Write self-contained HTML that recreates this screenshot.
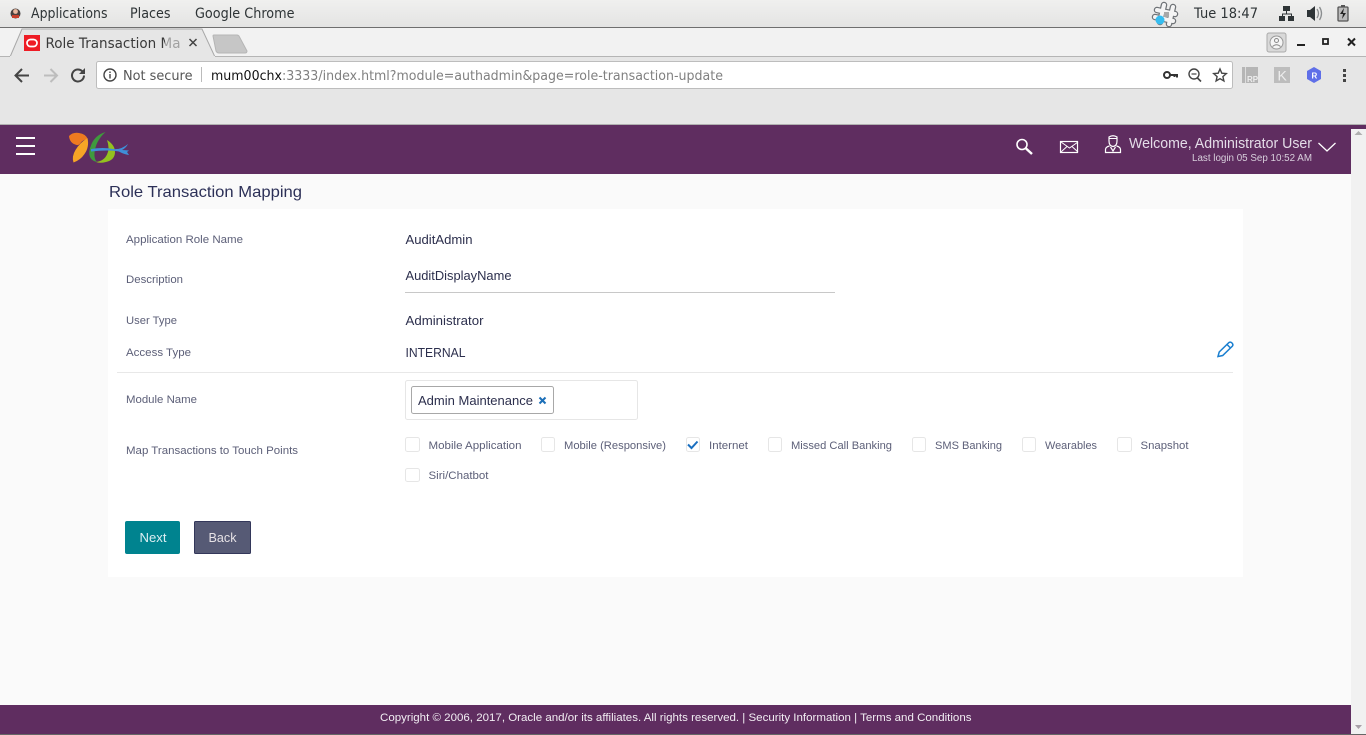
<!DOCTYPE html>
<html lang="en"><head><meta charset="utf-8"><title>Role Transaction Mapping</title>
<style>
html,body{margin:0;padding:0;width:1366px;height:735px;overflow:hidden;background:#fafafa}
svg{display:block;position:absolute;left:0;top:0}
text{font-family:"Liberation Sans",sans-serif;white-space:pre}
.ui{font-family:"DejaVu Sans","Liberation Sans",sans-serif;fill:#2e3436}
.lb{font-size:11px;fill:#5c5f78}
.v{font-size:12.5px;fill:#2c2f4d}
.cb{font-size:11px;fill:#5c5f78}
.box{fill:#fff;stroke:#e6e6e6}
</style></head><body>
<svg width="1366" height="735" viewBox="0 0 1366 735" xmlns="http://www.w3.org/2000/svg">
<defs>
<linearGradient id="top" x1="0" y1="0" x2="0" y2="1"><stop offset="0" stop-color="#f0f0ef"/><stop offset="1" stop-color="#e4e4e3"/></linearGradient>
</defs>
<!-- GNOME bar -->
<rect width="1366" height="27" fill="url(#top)"/>
<rect y="27" width="1366" height="1" fill="#6f6f6f"/>
<circle cx="15.500" cy="13.500" r="5" fill="#4a4240"/><circle cx="15.500" cy="11.500" r="2.400" fill="#e9b9a0"/><rect x="12" y="15" width="7" height="3" fill="#c8402c"/>
<text class="ui" x="31" y="18" font-size="14" textLength="76.500" lengthAdjust="spacingAndGlyphs">Applications</text>
<text class="ui" x="130" y="18" font-size="14" textLength="40.500" lengthAdjust="spacingAndGlyphs">Places</text>
<text class="ui" x="195" y="18" font-size="14" textLength="99.500" lengthAdjust="spacingAndGlyphs">Google Chrome</text>
<!-- hash-shaped tray icon -->
<g fill="none" stroke-linecap="round">
<g stroke="#6f7377" stroke-width="6.500"><path d="M1164 5l-4 17M1173 7l-4 17M1157 10l18 4M1155 17l18 4"/></g>
<g stroke="#f4f4f4" stroke-width="4"><path d="M1164 5l-4 17M1173 7l-4 17M1157 10l18 4M1155 17l18 4"/></g>
</g>
<rect x="1164" y="12" width="5" height="5" fill="#a8a8a8"/>
<circle cx="1160" cy="20" r="4.500" fill="#35bdf0"/>
<text class="ui" x="1194" y="18" font-size="14" textLength="64" lengthAdjust="spacingAndGlyphs">Tue 18:47</text>
<g fill="#2e3436"><rect x="1283" y="6" width="7" height="5"/><rect x="1279" y="16" width="6" height="5"/><rect x="1288" y="16" width="6" height="5"/><path d="M1286 11h1v2.500h5V16h-1v-1.500h-8V16h-1v-2.500h4z"/></g>
<path d="M1307 10h3l5-4v15l-5-4h-3z" fill="#2e3436"/><path d="M1317 9q3 4.500 0 9M1319.500 7q4 6.500 0 13" fill="none" stroke="#8a8d8f" stroke-width="1.300"/>
<rect x="1338" y="7" width="10" height="14" rx="1" fill="#bbb" stroke="#555" stroke-width="1.300"/><rect x="1341" y="5" width="4" height="2" fill="#555"/><path d="M1344 8l-4 6h3l-1 5 4-6h-3z" fill="#222"/>
<!-- Tab strip -->
<rect y="28" width="1366" height="29" fill="#f2f2f2"/>
<rect y="56" width="1366" height="1" fill="#b5b5b5"/>
<path d="M10 57L22 29H202L215 57z" fill="#e6e6e6" stroke="#a8a8a8"/>
<rect x="10" y="56" width="205" height="2" fill="#e6e6e6"/>
<path d="M213 36q0-1 1-1h23q1 0 2 1l8 15q0 2-2 2h-26q-2 0-3-2z" fill="#c6c6c6" stroke="#b5b5b5"/>
<rect x="24" y="35" width="16" height="16" fill="#ee1c25"/><rect x="27" y="39.500" width="10" height="7" rx="3.500" fill="none" stroke="#fff" stroke-width="1.700"/>
<text class="ui" x="45.500" y="48" font-size="14.500" textLength="135" lengthAdjust="spacingAndGlyphs" style="fill:#3a3a3a">Role Transaction Ma</text>
<rect x="165" y="33" width="16" height="20" fill="#e6e6e6" opacity=".6"/>
<path d="M189.500 39l7 7M196.500 39l-7 7" stroke="#444" stroke-width="1.500"/>
<rect x="1267" y="33" width="19" height="19" rx="2" fill="#d9d9d9" stroke="#aaa"/><circle cx="1276.500" cy="42.500" r="6.500" fill="#f5f5f5" stroke="#999"/><circle cx="1276.500" cy="40.500" r="2" fill="none" stroke="#888"/><path d="M1272.500 46.500q4-3.500 8 0" fill="none" stroke="#888"/>
<rect x="1297" y="44" width="8" height="2" fill="#222"/>
<rect x="1323" y="39" width="5" height="5" fill="none" stroke="#222" stroke-width="1.800"/>
<path d="M1348 38.500l7 7M1355 38.500l-7 7" stroke="#222" stroke-width="2"/>
<!-- Toolbar -->
<rect y="57" width="1366" height="67" fill="#e6e6e6"/>
<rect y="124" width="1366" height="1" fill="#b0b0b0"/>
<path d="M29 75.500H16M22 69l-6.500 6.500L22 82" fill="none" stroke="#444" stroke-width="2"/>
<path d="M57 75.500H44M50.500 69l6.500 6.500L50.500 82" fill="none" stroke="#bdbdbd" stroke-width="2"/>
<path d="M84 75.500a6 6 0 1 1-1.800-4.300" fill="none" stroke="#444" stroke-width="2"/><path d="M85 68v6h-6z" fill="#444"/>
<rect x="96.500" y="61.500" width="1136" height="27" rx="2" fill="#fff" stroke="#bdbdbd"/>
<circle cx="110" cy="75" r="6" fill="none" stroke="#444" stroke-width="1.400"/><rect x="109.300" y="74" width="1.400" height="4.500" fill="#444"/><rect x="109.300" y="71.500" width="1.400" height="1.500" fill="#444"/>
<text class="ui" x="123" y="80" font-size="13" textLength="69.500" lengthAdjust="spacingAndGlyphs" style="fill:#555">Not secure</text>
<rect x="201" y="67" width="1" height="15" fill="#bbb"/>
<text class="ui" x="211" y="80" font-size="13" textLength="512" lengthAdjust="spacingAndGlyphs" style="fill:#808080"><tspan fill="#111">mum00chx</tspan>:3333/index.html?module=authadmin&amp;page=role-transaction-update</text>
<circle cx="1167" cy="75" r="3" fill="none" stroke="#333" stroke-width="2"/><path d="M1170 75h7v2.500M1174.500 75v2" fill="none" stroke="#333" stroke-width="2"/>
<circle cx="1194" cy="74" r="5" fill="none" stroke="#444" stroke-width="1.400"/><path d="M1197.500 78l3.500 3.500" stroke="#444" stroke-width="1.600"/><path d="M1191.500 74h5" stroke="#444" stroke-width="1.200"/>
<path d="M1220 69l1.800 4.200 4.500.4-3.400 3 1 4.400-3.900-2.300-3.900 2.300 1-4.400-3.400-3 4.500-.4z" fill="none" stroke="#444" stroke-width="1.400"/>
<rect x="1242" y="67" width="16" height="16" fill="#b5b5b5"/><rect x="1245" y="67" width="1" height="16" fill="#ddd"/><text x="1247" y="82" font-size="8" font-weight="bold" fill="#eee">RP</text>
<rect x="1274" y="67" width="16" height="16" fill="#bdbdbd"/><text x="1277.500" y="80.500" font-size="14" fill="#eee">K</text>
<path d="M1314 67l7 4v8l-7 4-7-4v-8z" fill="#5f6fe8"/><text x="1311.500" y="78.500" font-size="8" font-weight="bold" fill="#fff">R</text>
<g fill="#444"><rect x="1343" y="69" width="3" height="3"/><rect x="1343" y="74" width="3" height="3"/><rect x="1343" y="79" width="3" height="3"/></g>
<!-- Page -->
<rect y="125" width="1366" height="609" fill="#fafafa"/>
<rect x="1351" y="125" width="15" height="609" fill="#f1f1f1"/>
<path d="M1358.500 131l4 4h-8z" fill="#b0b0b0"/><path d="M1355 725h7l-3.500 4z" fill="#a8a0a8"/>
<rect y="125" width="1366" height="4" fill="#5f2d60"/>
<rect y="129" width="1351" height="45" fill="#5f2d60"/>
<g fill="#fff"><rect x="16" y="137" width="19" height="2"/><rect x="16" y="145" width="19" height="2"/><rect x="16" y="153" width="19" height="2"/></g>
<!-- logo -->
<path d="M69 136q4-4 10-3 7 1 8.500 6-5 1-7 4-1.500 2.500-4 2-7-2-7.500-9z" fill="#ee7a20"/>
<path d="M87.500 138q2 9-3 16-4 6-11 8.500-2-6 2-12.500 4-7 12-12z" fill="#f7a526"/>
<path d="M105.500 132q-10 3-14 12-3.500 8-1.500 13 2 4 7 5-3-3-2.500-9 1-12 11-21z" fill="#3f9a3d"/>
<path d="M107 140q8 5 8 12 0 8-9 10-6 1.500-10 0 8-1 11-7.500 3-6 0-14.500z" fill="#94c11f"/>
<path d="M91 149q12-2 22 0 8 1 15-5-2 4-6 6l7 .5-2 1.500 2 3q-6-1-10-3.500-5-1-12-1-8 0-16 1z" fill="#3f8fd8"/>
<text x="109" y="197" font-size="16" fill="#2c3057" textLength="193" lengthAdjust="spacingAndGlyphs">Role Transaction Mapping</text>
<circle cx="1022" cy="144.500" r="5" fill="none" stroke="#fff" stroke-width="1.600"/><path d="M1026 148.500l6 5.500" stroke="#fff" stroke-width="2.400"/>
<rect x="1060.500" y="141.500" width="17" height="11" fill="none" stroke="#fff" stroke-width="1.200"/><path d="M1061 142l8.500 6 8.500-6M1061 152l6-5.500M1078 152l-6-5.500" fill="none" stroke="#fff" stroke-width="1"/>
<path d="M1109 137q4-2.500 8 0v4q0 5-4 5.500-4-.5-4-5.500z" fill="none" stroke="#fff" stroke-width="1.200"/><path d="M1109 138.500h8" stroke="#fff"/><path d="M1109.500 146q-4 1-4 3.500v3h15v-3q0-2.500-4-3.500M1110.500 147l2.500 4 2.500-4" fill="none" stroke="#fff" stroke-width="1.200"/>
<text x="1129" y="148" font-size="14.500" fill="#e4dce8" textLength="183" lengthAdjust="spacingAndGlyphs">Welcome, Administrator User</text>
<text x="1192" y="161" font-size="10" fill="#d8cfdc" textLength="120" lengthAdjust="spacingAndGlyphs">Last login 05 Sep 10:52 AM</text>
<path d="M1318.500 143l8.500 8 8.500-8" fill="none" stroke="#fff" stroke-width="1.300"/>
<!-- Card -->
<rect x="108" y="209" width="1135" height="368" fill="#fff"/>
<text class="lb" x="126" y="243" textLength="117" lengthAdjust="spacingAndGlyphs">Application Role Name</text>
<text class="lb" x="126" y="283" textLength="57" lengthAdjust="spacingAndGlyphs">Description</text>
<text class="lb" x="126" y="324" textLength="51" lengthAdjust="spacingAndGlyphs">User Type</text>
<text class="lb" x="126" y="356" textLength="65" lengthAdjust="spacingAndGlyphs">Access Type</text>
<text class="lb" x="126" y="403" textLength="71" lengthAdjust="spacingAndGlyphs">Module Name</text>
<text class="lb" x="126" y="454" textLength="172" lengthAdjust="spacingAndGlyphs">Map Transactions to Touch Points</text>
<text class="v" x="405.500" y="244" textLength="67" lengthAdjust="spacingAndGlyphs">AuditAdmin</text>
<text class="v" x="405.500" y="280" textLength="106" lengthAdjust="spacingAndGlyphs">AuditDisplayName</text>
<rect x="405" y="292" width="430" height="1" fill="#c8c8c8"/>
<text class="v" x="405.500" y="325" textLength="78" lengthAdjust="spacingAndGlyphs">Administrator</text>
<text class="v" x="405.500" y="357" textLength="60" lengthAdjust="spacingAndGlyphs">INTERNAL</text>
<path d="M1218 356.500l1.200-4.500 9.800-9.500q1.500-1 3 .5t.5 3l-9.800 9.500z M1227 344.500l3.500 3.500" fill="none" stroke="#1a7fd0" stroke-width="1.500"/>
<rect x="117" y="372" width="1116" height="1" fill="#e8e8e8"/>
<rect x="405.500" y="380.500" width="232" height="39" rx="2" fill="#fff" stroke="#e6e6e6"/>
<rect x="411.500" y="386.500" width="142" height="27" rx="2" fill="#fff" stroke="#a8a8a8"/>
<text class="v" x="418" y="405" textLength="115" lengthAdjust="spacingAndGlyphs">Admin Maintenance</text>
<path d="M539.500 397.500l6 6M545.500 397.500l-6 6" stroke="#1c6fb8" stroke-width="2"/>
<rect class="box" x="405.500" y="437.500" width="14" height="14" rx="2"/><text class="cb" x="428.500" y="449" textLength="93" lengthAdjust="spacingAndGlyphs">Mobile Application</text>
<rect class="box" x="541.500" y="437.500" width="13" height="14" rx="2"/><text class="cb" x="564" y="449" textLength="102" lengthAdjust="spacingAndGlyphs">Mobile (Responsive)</text>
<rect class="box" x="686.500" y="437.500" width="13" height="14" rx="2"/><path d="M688 444.500l3.500 3.500 6-6.500" fill="none" stroke="#1a6fc0" stroke-width="2"/><text class="cb" x="709" y="449" textLength="39" lengthAdjust="spacingAndGlyphs">Internet</text>
<rect class="box" x="768.500" y="437.500" width="13" height="14" rx="2"/><text class="cb" x="791" y="449" textLength="101" lengthAdjust="spacingAndGlyphs">Missed Call Banking</text>
<rect class="box" x="912.500" y="437.500" width="13" height="14" rx="2"/><text class="cb" x="935" y="449" textLength="67" lengthAdjust="spacingAndGlyphs">SMS Banking</text>
<rect class="box" x="1022.500" y="437.500" width="13" height="14" rx="2"/><text class="cb" x="1045" y="449" textLength="52" lengthAdjust="spacingAndGlyphs">Wearables</text>
<rect class="box" x="1117.500" y="437.500" width="14" height="14" rx="2"/><text class="cb" x="1140.500" y="449" textLength="48" lengthAdjust="spacingAndGlyphs">Snapshot</text>
<rect class="box" x="405.500" y="468.500" width="14" height="13" rx="2"/><text class="cb" x="428.500" y="479" textLength="60" lengthAdjust="spacingAndGlyphs">Siri/Chatbot</text>
<rect x="125" y="521" width="55" height="33" rx="2" fill="#00838f"/>
<text x="139.500" y="542" font-size="12.500" fill="#dceef2" textLength="27" lengthAdjust="spacingAndGlyphs">Next</text>
<rect x="194.500" y="521.500" width="56" height="32" rx="1" fill="#565a75" stroke="#33375a"/>
<text x="208.500" y="542" font-size="12.500" fill="#e6e2e6" textLength="28" lengthAdjust="spacingAndGlyphs">Back</text>
<!-- Footer -->
<rect y="705" width="1351" height="29" fill="#5f2d60"/>
<text x="380" y="721" font-size="11" fill="#f2eef3" textLength="591.500" lengthAdjust="spacingAndGlyphs">Copyright © 2006, 2017, Oracle and/or its affiliates. All rights reserved. | Security Information | Terms and Conditions</text>
<rect y="734" width="1366" height="1" fill="#666"/>
</svg>
</body></html>
